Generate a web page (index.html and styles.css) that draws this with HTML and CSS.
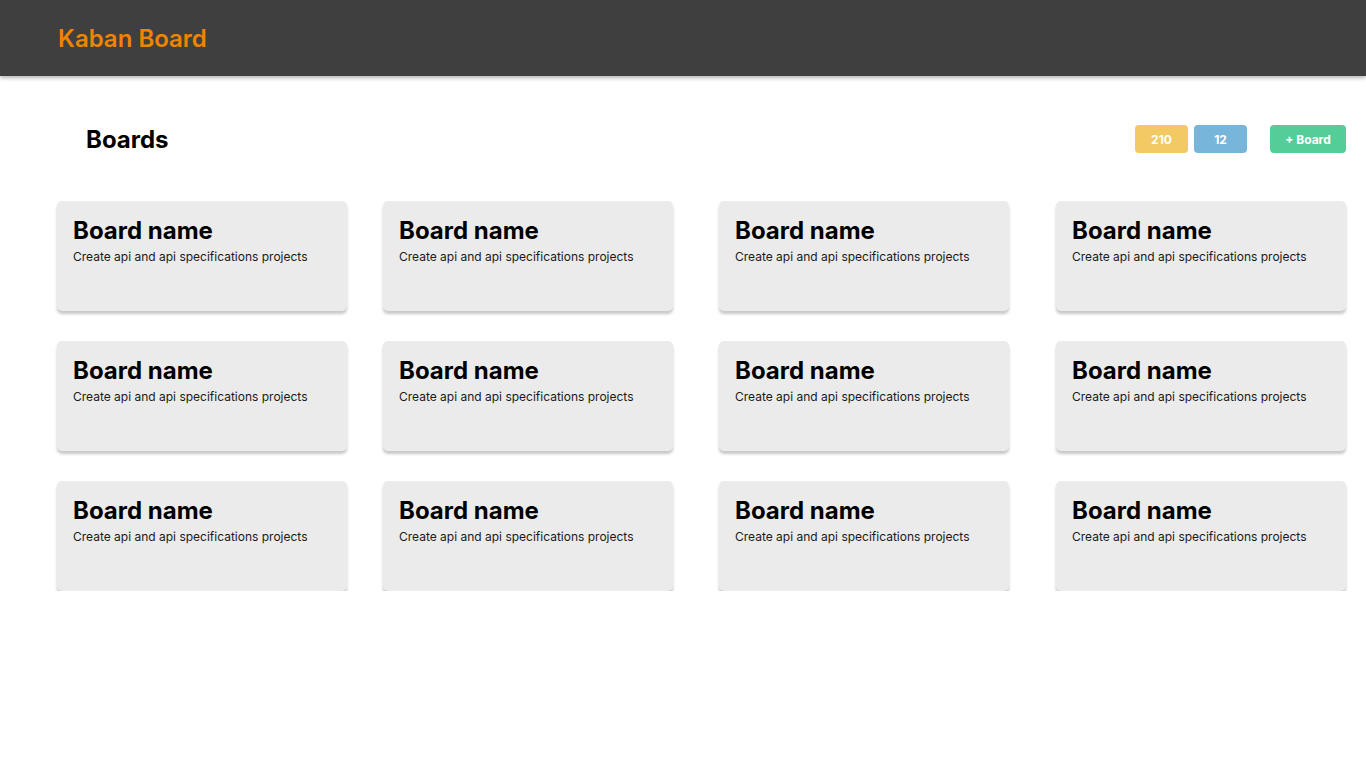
FILE: index.html
```html
<!DOCTYPE html>
<html lang="en">
<head>
<meta charset="utf-8">
<title>Kaban Board</title>
<link rel="stylesheet" href="styles.css">
</head>
<body>
<header class="topbar">
  <h1 class="brand">Kaban Board</h1>
</header>
<main class="page">
  <div class="toolbar">
    <h2 class="heading">Boards</h2>
    <div class="actions">
      <span class="badge badge-yellow">210</span>
      <span class="badge badge-blue">12</span>
      <button class="badge badge-green add-btn">+ Board</button>
    </div>
  </div>
  <section class="grid">
    <div class="card"><h3 class="card-title">Board name</h3><p class="card-desc">Create api and api specifications projects</p></div>
    <div class="card"><h3 class="card-title">Board name</h3><p class="card-desc">Create api and api specifications projects</p></div>
    <div class="card"><h3 class="card-title">Board name</h3><p class="card-desc">Create api and api specifications projects</p></div>
    <div class="card"><h3 class="card-title">Board name</h3><p class="card-desc">Create api and api specifications projects</p></div>
    <div class="card"><h3 class="card-title">Board name</h3><p class="card-desc">Create api and api specifications projects</p></div>
    <div class="card"><h3 class="card-title">Board name</h3><p class="card-desc">Create api and api specifications projects</p></div>
    <div class="card"><h3 class="card-title">Board name</h3><p class="card-desc">Create api and api specifications projects</p></div>
    <div class="card"><h3 class="card-title">Board name</h3><p class="card-desc">Create api and api specifications projects</p></div>
    <div class="card"><h3 class="card-title">Board name</h3><p class="card-desc">Create api and api specifications projects</p></div>
    <div class="card"><h3 class="card-title">Board name</h3><p class="card-desc">Create api and api specifications projects</p></div>
    <div class="card"><h3 class="card-title">Board name</h3><p class="card-desc">Create api and api specifications projects</p></div>
    <div class="card"><h3 class="card-title">Board name</h3><p class="card-desc">Create api and api specifications projects</p></div>
  </section>
</main>
</body>
</html>
```
FILE: styles.css
```css
* { box-sizing: border-box; }
html, body {
  margin: 0;
  padding: 0;
  background: #ffffff;
  font-family: Inter, "Noto Sans", sans-serif;
  color: #000;
}
.topbar {
  height: 76px;
  background: #3f3f3f;
  display: flex;
  align-items: center;
  padding-left: 58px;
  box-shadow: 0 2px 4px rgba(0, 0, 0, 0.3);
  position: relative;
  z-index: 1;
}
.brand {
  margin: 0;
  font-size: 24px;
  font-weight: 600;
  color: #f08400;
  line-height: normal;
}
.page {
  padding: 49px 20px 0 57px;
}
.toolbar {
  display: flex;
  align-items: center;
  justify-content: space-between;
  height: 28px;
}
.heading {
  margin: 0 0 0 29px;
  font-size: 24px;
  font-weight: 700;
  line-height: normal;
}
.actions {
  display: flex;
  align-items: center;
}
.badge {
  display: inline-flex;
  align-items: center;
  justify-content: center;
  height: 28px;
  width: 53px;
  border-radius: 4px;
  color: #fff;
  font-family: Inter, sans-serif;
  font-size: 12px;
  font-weight: 700;
  border: none;
  padding: 0;
}
.badge + .badge { margin-left: 6px; }
.badge-yellow { background: #f2c964; }
.badge-blue { background: #78b5da; }
.badge-green { background: #55cd99; }
.add-btn {
  width: 76px;
  margin-left: 23px !important;
}
.grid {
  margin-top: 48px;
  display: grid;
  grid-template-columns: 326px 336px 337px 290px;
  grid-auto-rows: 110px;
  row-gap: 30px;
}
.card {
  width: 290px;
  background: #ebebeb;
  border-radius: 5px;
  box-shadow: 0 3px 3px rgba(0, 0, 0, 0.22);
  padding: 15px 16px 0 16px;
}
.card-title {
  margin: 0;
  font-size: 24px;
  font-weight: 700;
  line-height: normal;
}
.card-desc {
  margin: 4px 0 0 0;
  font-size: 12px;
  font-weight: 400;
  color: #1a1a1a;
  line-height: normal;
}
```
